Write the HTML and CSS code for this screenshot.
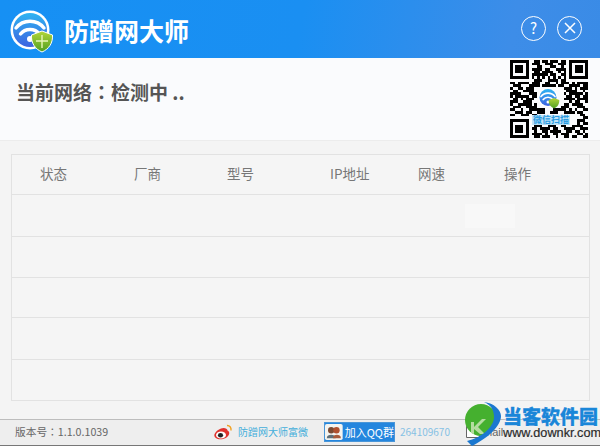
FILE: index.html
```html
<!DOCTYPE html>
<html lang="zh-CN">
<head>
    <meta charset="UTF-8">
    <title>防蹭网大师</title>
    <link rel="stylesheet" href="styles.css">
</head>
<body>
    <div class="app">
        <header class="titlebar">
            <svg class="logo" viewBox="0 0 44 44" width="44" height="44">
                <defs>
                    <linearGradient id="disc" x1="0" y1="0" x2="0" y2="1">
                        <stop offset="0" stop-color="#2fb4f2"/>
                        <stop offset="1" stop-color="#3d63e0"/>
                    </linearGradient>
                    <linearGradient id="shield" x1="0" y1="0" x2="0" y2="1">
                        <stop offset="0" stop-color="#b4d63a"/>
                        <stop offset="1" stop-color="#4f9f22"/>
                    </linearGradient>
                </defs>
                <circle cx="20" cy="21" r="19.5" fill="#fff"/>
                <circle cx="20" cy="21" r="17" fill="url(#disc)"/>
                <path d="M6 19 C13 10 27 10 34 19" fill="none" stroke="#fff" stroke-width="3.4" stroke-linecap="round"/>
                <path d="M10.500 25 C15 19 25 19 29.500 25" fill="none" stroke="#fff" stroke-width="3.400" stroke-linecap="round"/>
                <circle cx="20" cy="30" r="3" fill="#fff"/>
                <path d="M32 22 L42.500 26 C43 34 39 40 32 43 C25 40 21 34 21.500 26 Z" fill="url(#shield)" stroke="#fff" stroke-width="1"/>
                <path d="M32 26 V39 M26 32 H38" stroke="#e8f5b8" stroke-width="1.400"/>
            </svg>
            <h1 class="app-name">防蹭网大师</h1>
            <div class="win-btns">
                <span class="win-btn">?</span>
                <span class="win-btn">
                    <svg viewBox="0 0 12 12" width="12" height="12"><path d="M1 1 L11 11 M11 1 L1 11" stroke="#fff" stroke-width="1.500"/></svg>
                </span>
            </div>
        </header>

        <section class="status">
            <div class="status-text" lang="zh-TW">当前网络：检测中 ..</div>
            <div class="qr">
                <svg viewBox="0 0 29 29" width="78" height="78" shape-rendering="crispEdges">
                    <path stroke="#000" fill="none" d="M0 .5h7M9 .5h2M12 .5h2M15 .5h3M19 .5h2M22 .5h7
                        M0 1.500h1M6 1.500h1M8 1.500h3M13 1.500h3M18 1.500h3M22 1.500h1M28 1.500h1
                        M0 2.500h1M2 2.500h3M6 2.500h1M10 2.500h2M15 2.500h2M19 2.500h1M22 2.500h1M24 2.500h3M28 2.500h1
                        M0 3.500h1M2 3.500h3M6 3.500h1M8 3.500h4M13 3.500h2M17 3.500h4M22 3.500h1M24 3.500h3M28 3.500h1
                        M0 4.500h1M2 4.500h3M6 4.500h1M9 4.500h2M12 4.500h4M18 4.500h1M20 4.500h1M22 4.500h1M24 4.500h3M28 4.500h1
                        M0 5.500h1M6 5.500h1M8 5.500h6M15 5.500h2M19 5.500h2M22 5.500h1M28 5.500h1
                        M0 6.500h7M8 6.500h1M10 6.500h1M12 6.500h1M14 6.500h1M16 6.500h1M18 6.500h1M20 6.500h1M22 6.500h7
                        M9 7.500h3M14 7.500h4M19 7.500h2
                        M0 8.500h2M3 8.500h4M8 8.500h3M13 8.500h2M17 8.500h1M19 8.500h3M23 8.500h1M25 8.500h4
                        M1 9.500h3M7 9.500h4M12 9.500h5M18 9.500h2M22 9.500h4M27 9.500h2
                        M0 10.500h1M3 10.500h2M6 10.500h3M20 10.500h3M24 10.500h1M26 10.500h3
                        M1 11.500h2M5 11.500h4M21 11.500h4M27 11.500h1
                        M0 12.500h4M7 12.500h3M20 12.500h1M22 12.500h5M28 12.500h1
                        M0 13.500h1M2 13.500h5M8 13.500h2M21 13.500h2M24 13.500h2M27 13.500h2
                        M1 14.500h2M4 14.500h1M6 14.500h3M20 14.500h4M25 14.500h4
                        M0 15.500h3M5 15.500h3M22 15.500h1M24 15.500h2M28 15.500h1
                        M0 16.500h1M3 16.500h5M9 16.500h1M20 16.500h2M23 16.500h4
                        M1 17.500h3M6 17.500h4M19 17.500h3M25 17.500h3
                        M0 18.500h2M4 18.500h1M7 18.500h6M16 18.500h5M22 18.500h1M24 18.500h1M27 18.500h2
                        M2 19.500h3M6 19.500h2M10 19.500h3M15 19.500h3M20 19.500h4M25 19.500h2
                        M0 20.500h2M4 20.500h3M8 20.500h2M26 20.500h2
                        M8 21.500h2M27 21.500h2
                        M0 22.500h7M9 22.500h1M25 22.500h3
                        M0 23.500h1M6 23.500h1M8 23.500h3M25 23.500h1M27 23.500h2
                        M0 24.500h1M2 24.500h3M6 24.500h1M9 24.500h3M14 24.500h3M19 24.500h2M23 24.500h4
                        M0 25.500h1M2 25.500h3M6 25.500h1M8 25.500h2M11 25.500h4M16 25.500h2M20 25.500h4M26 25.500h3
                        M0 26.500h1M2 26.500h3M6 26.500h1M9 26.500h1M12 26.500h2M15 26.500h4M21 26.500h2M24 26.500h2M27 26.500h1
                        M0 27.500h1M6 27.500h1M8 27.500h4M13 27.500h1M16 27.500h2M19 27.500h3M25 27.500h2M28 27.500h1
                        M0 28.500h7M9 28.500h2M12 28.500h3M17 28.500h1M20 28.500h2M23 28.500h2M27 28.500h2"/>
                </svg>
                <svg class="qr-logo" viewBox="0 0 44 44" width="22" height="22">
                    <circle cx="20" cy="21" r="19.500" fill="#fff"/>
                    <circle cx="20" cy="21" r="17" fill="url(#disc)"/>
                    <path d="M6 19 C13 10 27 10 34 19" fill="none" stroke="#fff" stroke-width="3.400" stroke-linecap="round"/>
                    <path d="M10.500 25 C15 19 25 19 29.500 25" fill="none" stroke="#fff" stroke-width="3.400" stroke-linecap="round"/>
                    <circle cx="20" cy="30" r="3" fill="#fff"/>
                    <path d="M32 22 L42.500 26 C43 34 39 40 32 43 C25 40 21 34 21.500 26 Z" fill="url(#shield)"/>
                </svg>
                <span class="qr-label">微信扫描</span>
            </div>
        </section>

        <main class="content">
            <div class="device-table">
                <div class="row head">
                    <span>状态</span>
                    <span>厂商</span>
                    <span>型号</span>
                    <span>IP地址</span>
                    <span>网速</span>
                    <span>操作</span>
                </div>
                <div class="row row-a"><span class="blank-btn"></span></div>
                <div class="row row-b"></div>
                <div class="row row-c"></div>
                <div class="row row-a"></div>
                <div class="row row-last"></div>
            </div>
        </main>

        <footer class="footer">
            <span class="version" lang="zh-TW">版本号：1.1.0.1039</span>
            <svg class="weibo" viewBox="0 0 20 18" width="20" height="18">
                <path d="M8 5.500 C11 4 14.500 5.500 14.500 7.500 C17 8.500 17 12 13.500 14.500 C10 17 4 17 1.800 14 C0 11 4 7 8 5.500 Z" fill="#e0322c"/>
                <ellipse cx="8" cy="12" rx="5" ry="3.600" fill="#fff"/>
                <ellipse cx="7.500" cy="12.200" rx="2.600" ry="2.200" fill="#222"/>
                <path d="M14 2.500 C16.500 2.300 18.500 4.500 18 7.500" fill="none" stroke="#f0a020" stroke-width="1.400"/>
            </svg>
            <span class="weibo-link">防蹭网大师富微</span>
            <span class="qq-btn">
                <svg viewBox="0 0 20 18" width="18" height="18">
                    <rect width="20" height="18" rx="2" fill="#f4f4f0"/>
                    <circle cx="7" cy="7" r="3.600" fill="#7a4a32"/>
                    <circle cx="13" cy="7" r="3.600" fill="#b0502e"/>
                    <path d="M2 16 C2 11 12 11 12 16 Z" fill="#5f6f78"/>
                    <path d="M9 16 C9 11 18 11 18 16 Z" fill="#a85a3a"/>
                </svg>
                <span>加入QQ群</span>
            </span>
            <span class="qq-num">264109670</span>
            <svg class="mail" viewBox="0 0 14 12" width="14" height="12">
                <path d="M.5 .5H13.500V11.500H.5Z M.5 .5L7 7L13.500 .5" fill="#fff" stroke="#666"/>
            </svg>
            <span class="mail-text">mail</span>
        </footer>

        <div class="watermark">
            <svg viewBox="0 0 38 44" width="38" height="44">
                <circle cx="17" cy="18" r="16" fill="#45b02f"/>
                <path d="M7 31 L7 20 L10 20 L10 25 L18 17 L22 17 L14 25 L21 32 L16 32 L10 27 L10 32 Z" fill="#b5dca0"/>
                <path d="M20 0 C30 1 37 8 37 14 C37 24 24 36 8 44 L3 39 C17 36 30 25 30 15 C30 8 27 3 20 0 Z" fill="#1b78d0"/>
            </svg>
            <div class="wm-text">
                <div class="wm-name">当客软件园</div>
                <div class="wm-url">www.downkr.com</div>
            </div>
        </div>
    </div>
</body>
</html>
```

FILE: styles.css
```css
* {
    box-sizing: border-box;
}
body {
    margin: 0;
    font-family: "Noto Sans CJK SC", "Liberation Sans", sans-serif;
}
.app {
    position: relative;
    width: 600px;
    height: 446px;
    overflow: hidden;
    display: flex;
    flex-direction: column;
    background: #f4f4f4;
}
.titlebar {
    height: 58px;
    flex: none;
    display: flex;
    align-items: center;
    padding: 0 18px 0 10px;
    background: linear-gradient(100deg, #1690f4 0%, #1a8ff2 50%, #3d8de8 85%, #3a8be6 100%);
}
.logo {
    flex: none;
    margin-top: 4px;
}
.app-name {
    margin: 2px 0 0 10px;
    font-size: 25px;
    line-height: 34px;
    font-weight: 700;
    color: #fff;
}
.win-btns {
    margin-left: auto;
    margin-bottom: 2px;
    display: flex;
    gap: 11px;
}
.win-btn {
    width: 25px;
    height: 25px;
    border: 1.500px solid #fff;
    border-radius: 50%;
    color: #fff;
    font-size: 15px;
    line-height: 22px;
    display: flex;
    align-items: center;
    justify-content: center;
}
.status {
    height: 83px;
    flex: none;
    display: flex;
    align-items: flex-start;
    padding: 2px 12px 0 16px;
    background: #fafbfd;
    border-bottom: 1px solid #ececec;
}
/* TC glyphs have the colon centred in its box, like the original */
.status-text {
    margin-top: 18px;
    font-family: "Noto Sans CJK TC", "Liberation Sans", sans-serif;
    font-size: 19px;
    line-height: 28px;
    font-weight: 700;
    color: #555;
}
.qr {
    position: relative;
    margin-left: auto;
    width: 78px;
    height: 78px;
}
.qr svg {
    display: block;
}
.qr .qr-logo {
    position: absolute;
    left: 28px;
    top: 27px;
}
.qr-label {
    position: absolute;
    left: 22px;
    top: 55px;
    width: 38px;
    height: 10px;
    font-size: 9px;
    line-height: 10px;
    font-weight: 700;
    text-align: center;
    white-space: nowrap;
    color: #2b9ae0;
    background: #bfe4f8;
}
.content {
    flex: 1;
    padding: 13px 10px 18px 11px;
}
.device-table {
    height: 247px;
    border: 1px solid #e2e2e2;
    background: #f5f5f5;
}
.row {
    display: grid;
    grid-template-columns: 94px 93px 103px 88px 86px 1fr;
    align-items: center;
    padding-left: 28px;
    border-bottom: 1px solid #e2e2e2;
}
.head {
    height: 40px;
    padding-bottom: 3px;
    font-size: 13.500px;
    color: #777;
}
.row-a {
    height: 42px;
}
.row-b {
    height: 41px;
}
.row-c {
    height: 40px;
}
.row-last {
    height: 40px;
    border-bottom: none;
}
.blank-btn {
    grid-column: 5 / 7;
    justify-self: end;
    width: 50px;
    height: 24px;
    margin-right: 74px;
    background: #f8f8f8;
}
.footer {
    height: 28px;
    flex: none;
    display: flex;
    align-items: center;
    padding: 0 0 2px 15px;
    background: #eeeeee;
    border-top: 1px solid #bdbdbd;
    border-bottom: 2px solid #777;
}
.version {
    width: 198px;
    font-family: "Noto Sans CJK TC", "Liberation Sans", sans-serif;
    font-size: 10.700px;
    color: #666;
    white-space: nowrap;
}
.weibo {
    flex: none;
}
.weibo-link {
    margin-left: 5px;
    width: 86px;
    font-size: 10px;
    color: #45aedb;
    white-space: nowrap;
}
.qq-btn {
    flex: none;
    width: 71px;
    height: 20px;
    display: flex;
    align-items: center;
    background: #2486de;
    border: 1px solid #4a96d8;
    color: #fff;
    font-size: 11px;
    white-space: nowrap;
}
.qq-btn span {
    margin-left: 2px;
}
.qq-num {
    margin-left: 5px;
    width: 66px;
    font-size: 10px;
    color: #86c1e4;
}
.mail {
    flex: none;
}
.mail-text {
    margin-left: 3px;
    font-family: "Liberation Sans", sans-serif;
    font-size: 11px;
    color: #666;
}
.watermark {
    position: absolute;
    left: 464px;
    top: 402px;
    display: flex;
}
.wm-text {
    margin-left: 1px;
}
.wm-name {
    margin-top: 2px;
    font-size: 19px;
    line-height: 23px;
    font-weight: 900;
    color: #1a86d8;
    -webkit-text-stroke: .3px #1a86d8;
    text-shadow: 0 0 2px #fff;
}
.wm-url {
    font-family: "Liberation Sans", sans-serif;
    font-size: 12.700px;
    line-height: 13px;
    color: #2a2a2a;
    -webkit-text-stroke: .2px #2a2a2a;
}
```
